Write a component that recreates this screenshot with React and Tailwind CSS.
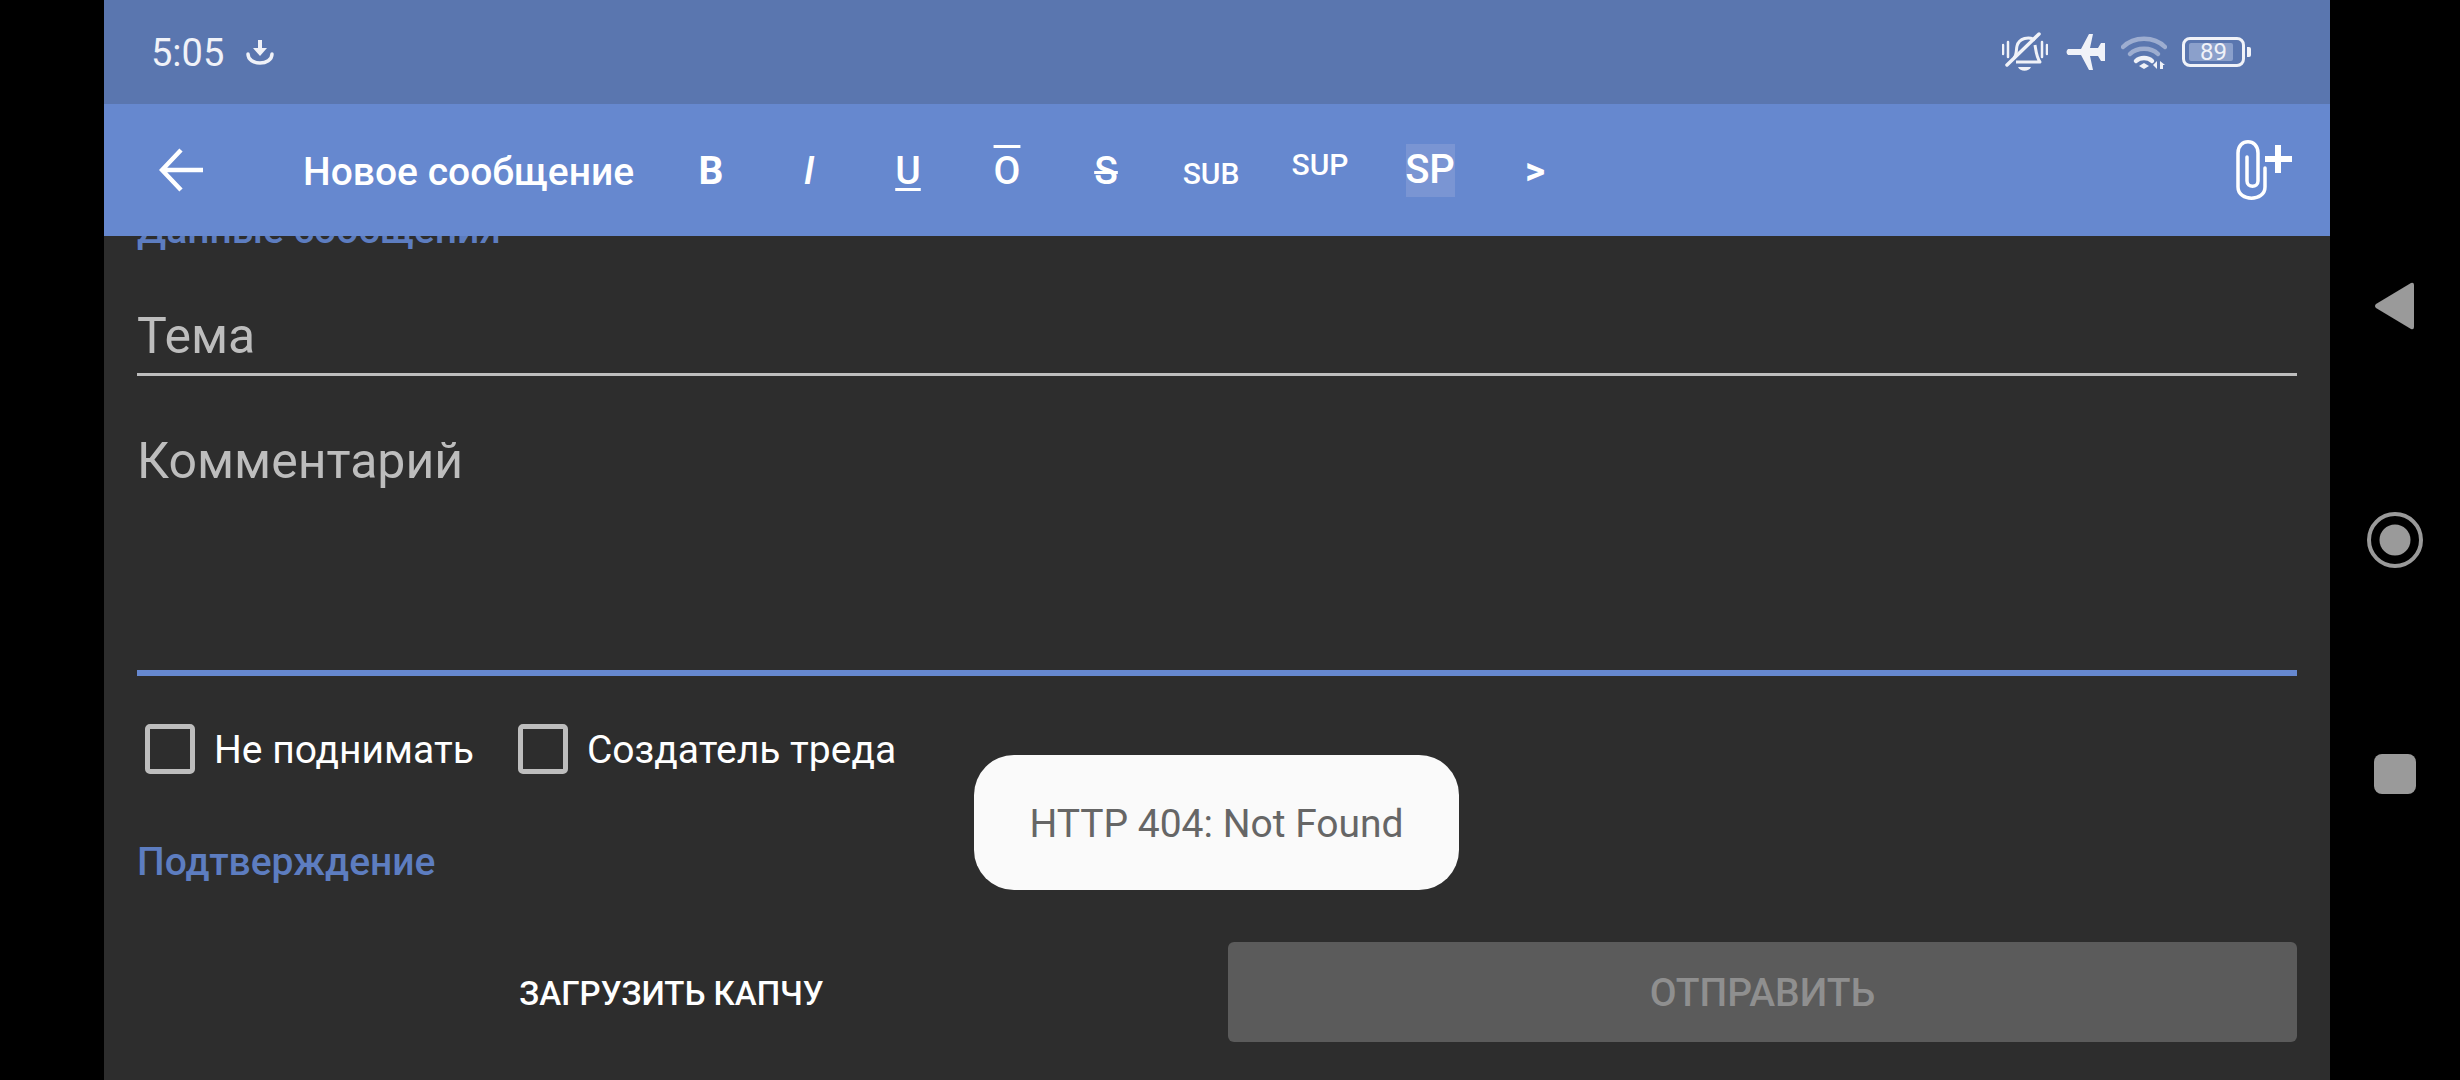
export default function App() {
  const tools = [
    { t: "B", c: "w-[98px] mt-[3px] font-bold text-[39px]" },
    { t: "I", c: "w-[98px] mt-[3px] italic font-medium text-[39px]" },
    { t: "U", c: "w-[100px] mt-[3px] font-medium text-[39px] underline decoration-[3px] underline-offset-[4px]" },
    { t: "O", c: "w-[98px] mt-[3px] font-medium text-[39px] overline decoration-[3px]" },
    { t: "S", c: "w-[100px] mt-[3px] font-medium text-[39px] line-through decoration-[3px]" },
    { t: "SUB", c: "w-[110px] font-medium text-[30px] mt-[8px]" },
    { t: "SUP", c: "w-[108px] font-medium text-[30px] mb-[10px]" },
    { t: "SP", c: "w-[112px] font-medium text-[40px]", hi: true },
    { t: ">", c: "w-[98px] mt-[3px] font-bold text-[39px]" },
  ];
  return (
    <div className="w-[2460px] h-[1080px] bg-black flex overflow-hidden font-['Roboto',sans-serif] relative">
      <div className="w-[104px] shrink-0" />
      <div className="w-[2226px] shrink-0 flex flex-col bg-[#2d2d2d]">
        <div className="h-[104px] bg-[#5a76af] flex items-center text-[#f0f2f8]">
          <span className="ml-[47px] mt-[1px] text-[38px] leading-none font-normal">5:05</span>
          <svg className="ml-[22px]" width="28" height="26" viewBox="0 0 28 26" fill="none">
            <path d="M14 1v13" stroke="#f0f2f8" strokeWidth="4" />
            <path d="M7 9h14l-7 8z" fill="#f0f2f8" />
            <path d="M2 15c0 12 24 12 24 0" stroke="#f0f2f8" strokeWidth="3.5" strokeLinecap="round" />
          </svg>
          <div className="flex-1" />
          <svg width="46" height="40" viewBox="0 0 46 40" fill="none" stroke="#f0f2f8">
            <path d="M1 13v9M6 10v15M40 10v15M45 13v9" strokeWidth="2.5" strokeLinecap="round" />
            <path d="M5 33 37 2" strokeWidth="3.5" strokeLinecap="round" />
            <path d="M12 26c3-3 2-8 3-12 2-8 12-10 18-6M33 13c1 5 1 11 5 17H14" strokeWidth="3" strokeLinejoin="round" />
            <path d="M16 35h13c-2 5-11 5-13 0z" fill="#f0f2f8" stroke="none" />
          </svg>
          <svg className="ml-[17px]" width="40" height="36" viewBox="0 0 40 36" fill="#f0f2f8">
            <path d="M3 15H16L24 0H28L25 14H33L36 9H40V27H36L33 22H25L28 36H24L16 21H3Q0 18 3 15Z" />
          </svg>
          <svg className="ml-[16px]" width="46" height="34" viewBox="0 0 46 34" fill="none" stroke="#f0f2f8" strokeLinecap="round">
            <path d="M2 12C13 1 33 1 44 12" strokeWidth="4.5" opacity="0.45" />
            <path d="M9 19C16 12 30 12 37 19" strokeWidth="4.5" opacity="0.45" />
            <path d="M15 26C19 22 27 22 31 26" strokeWidth="4.5" />
            <path d="M18 31l5-3 5 3-5 3z" fill="#f0f2f8" stroke="none" />
            <path d="M32 30l4-4v8zM39 26l5 4h-2v4h-3z" fill="#f0f2f8" stroke="none" />
          </svg>
          <div className="ml-[15px] w-[63px] h-[30px] border-[3px] border-[#f0f2f8] rounded-[8px] flex items-center justify-start pl-[4px]">
            <div className="w-[44px] h-[18px] bg-[#8ba0cb] rounded-[2px] flex items-center justify-center text-[24px] leading-none text-[#f0f2f8] pl-[5px]">89</div>
          </div>
          <div className="ml-[2px] w-[4px] h-[10px] bg-[#f0f2f8] rounded-r-[2px] mr-[79px]" />
        </div>

        <div className="h-[132px] bg-[#6688cf] flex items-center text-white relative z-10">
          <svg className="ml-[55px]" width="44" height="44" viewBox="0 0 44 44" fill="none" stroke="#fff" strokeWidth="4.5">
            <path d="M2 22H44M22 2 3 22l19 20" strokeLinejoin="miter" />
          </svg>
          <span className="ml-[100px] w-[359px] text-[39px] font-medium leading-none mt-[4px]">Новое сообщение</span>
          {tools.map((x) => (
            <div key={x.t} className={`flex justify-center text-center leading-none ${x.c}`}>
              {x.hi ? <span className="bg-[#7a95d3] h-[53px] w-[49px] flex items-center justify-center">{x.t}</span> : x.t}
            </div>
          ))}
          <div className="flex-1" />
          <svg className="mr-[38px] mt-[2px]" width="56" height="62" viewBox="0 0 56 62" fill="none" stroke="#fff">
            <path d="M29 28V47C29 62 2 62 2 47V13C2-2 22-2 22 13V41C22 48 11 48 11 41V17" strokeWidth="3.5" strokeLinecap="round" />
            <path d="M42 5V33M29 19H56" strokeWidth="6" />
          </svg>
        </div>

        <div className="flex-1 overflow-hidden px-[33px] relative">
          <div className="mt-[-27px] text-[39px] leading-[42px] font-medium text-[#5d7dc0]">Данные сообщения</div>
          <div className="mt-[29px] h-[96px] flex items-end border-b-[3px] border-[#bdbdbd] pb-[12px] text-[50px] leading-none text-[#bdbdbd]">
            Тема
          </div>
          <div className="h-[300px] pt-[60px] border-b-[6px] border-[#6688cf] text-[50px] leading-none text-[#bdbdbd]">
            Комментарий
          </div>
          <div className="mt-[48px] flex items-center text-[39px] leading-none text-white">
            <div className="ml-[8px] w-[50px] h-[50px] border-[5px] border-[#bdbdbd] rounded-[5px]" />
            <span className="ml-[19px] mt-[3px]">Не поднимать</span>
            <div className="ml-[44px] w-[50px] h-[50px] border-[5px] border-[#bdbdbd] rounded-[5px]" />
            <span className="ml-[19px] mt-[3px]">Создатель треда</span>
          </div>
          <div className="mt-[66px] text-[39px] leading-[44px] font-medium text-[#5d7dc0]">Подтверждение</div>
          <div className="mt-[58px] flex h-[100px] text-[33px] font-medium">
            <div className="w-[1069px] mr-[22px] pt-[4px] flex items-center justify-center text-white">ЗАГРУЗИТЬ КАПЧУ</div>
            <div className="w-[1069px] pt-[2px] rounded-[6px] bg-[#5b5b5b] flex items-center justify-center text-[#8f8f8f] text-[39px]">ОТПРАВИТЬ</div>
          </div>
        </div>
      </div>

      <div className="flex-1 flex flex-col items-center pt-[282px]">
        <svg width="40" height="48" viewBox="0 0 40 48" fill="#9a9a9a">
          <path d="M1 22 36 1Q39 0 39 3V45Q39 48 36 47L1 26Q-1 24 1 22Z" />
        </svg>
        <svg className="mt-[182px]" width="56" height="56" viewBox="0 0 56 56">
          <circle cx="28" cy="28" r="26" fill="none" stroke="#9a9a9a" strokeWidth="4" />
          <circle cx="28" cy="28" r="15.5" fill="#9a9a9a" />
        </svg>
        <div className="mt-[186px] w-[42px] h-[40px] rounded-[8px] bg-[#9a9a9a]" />
      </div>

      <div className="absolute left-[974px] top-[755px] w-[485px] h-[135px] pt-[4px] rounded-[40px] bg-[#fafafa] flex items-center justify-center text-[39px] text-[#666666]">
        HTTP 404: Not Found
      </div>
    </div>
  );
}
